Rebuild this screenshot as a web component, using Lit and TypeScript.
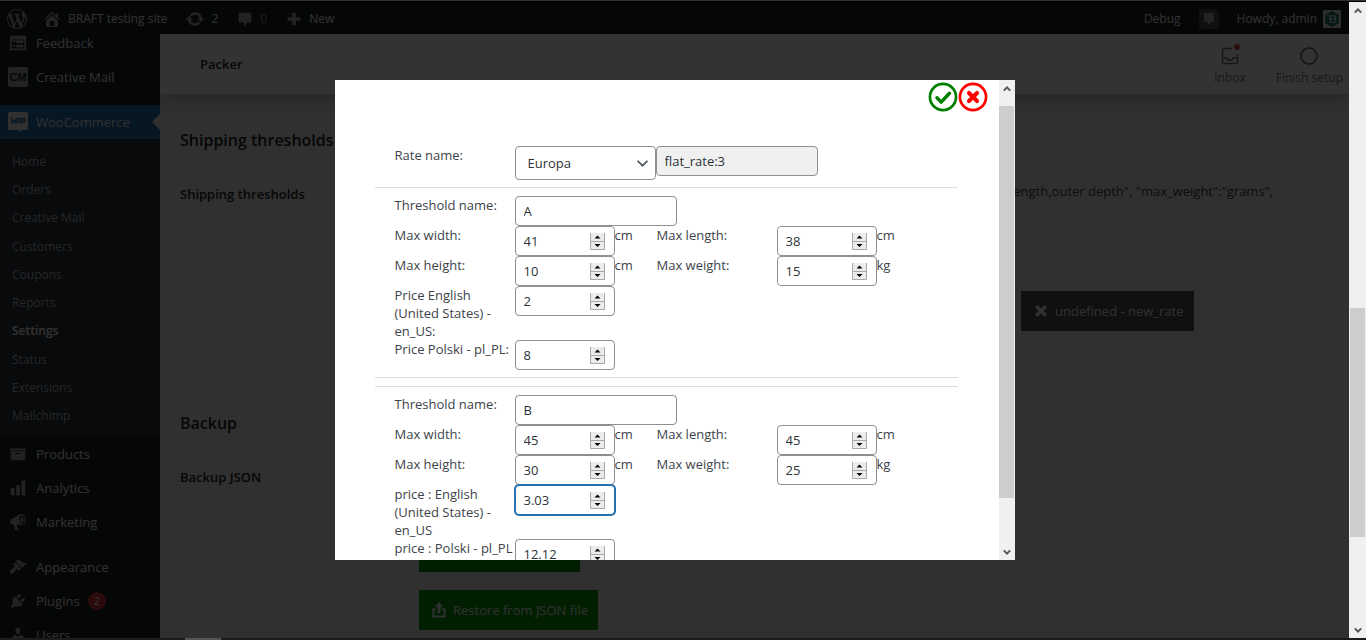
import { LitElement, html, css, svg, nothing } from "lit";
import { customElement, property } from "lit/decorators.js";

const ICONS: Record<string, unknown> = {
  wordpress: svg`<path d="M20 10c0-5.51-4.49-10-10-10C4.48 0 0 4.49 0 10c0 5.52 4.48 10 10 10 5.51 0 10-4.48 10-10zM7.78 15.37L4.37 6.22c.55-.02 1.17-.08 1.17-.08.5-.06.44-1.13-.06-1.11 0 0-1.45.11-2.37.11-.18 0-.37 0-.58-.01C4.12 2.69 6.87 1.11 10 1.11c2.33 0 4.45.87 6.05 2.34-.68-.11-1.65.39-1.65 1.58 0 .74.45 1.36.9 2.1.35.61.55 1.36.55 2.46 0 1.49-1.4 5-1.4 5l-3.03-8.37c.54-.02.82-.17.82-.17.5-.05.44-1.25-.06-1.22 0 0-1.44.12-2.38.12-.87 0-2.33-.12-2.33-.12-.5-.03-.56 1.2-.06 1.22l.92.08 1.26 3.41zM17.41 10c.24-.64.74-1.87.43-4.25.7 1.29 1.05 2.71 1.05 4.25 0 3.29-1.73 6.24-4.4 7.78.97-2.59 1.94-5.2 2.92-7.78zM6.1 18.09C3.12 16.65 1.11 13.53 1.11 10c0-1.3.23-2.48.72-3.59C3.25 10.3 4.67 14.2 6.1 18.09zm4.03-6.63l2.58 6.98c-.86.29-1.76.45-2.71.45-.79 0-1.57-.11-2.29-.33.81-2.38 1.62-4.74 2.42-7.1z"/>`,
  home: svg`<path fill-rule="evenodd" d="M16 8.5l1.53 1.53-1.06 1.06L10 4.6l-6.47 6.49-1.06-1.06L10 2.5l4 4v-2h2v4zm-6-2.46l6 5.99V18H4v-5.97zM12 17v-5H8v5h4z"/>`,
  update: svg`<path d="M10.2 3.28c3.53 0 6.43 2.61 6.92 6h2.08l-3.5 4-3.5-4h2.32c-.45-1.97-2.21-3.45-4.32-3.45-1.45 0-2.73.71-3.54 1.78L4.95 5.66C6.23 4.2 8.11 3.28 10.2 3.28zm-.4 13.44c-3.52 0-6.43-2.61-6.92-6H.8l3.5-4c1.17 1.33 2.33 2.67 3.5 4H5.48c.45 1.97 2.21 3.45 4.32 3.45 1.45 0 2.73-.71 3.54-1.78l1.71 1.95c-1.28 1.46-3.15 2.38-5.25 2.38z"/>`,
  comment: svg`<path d="M4 3h12c.6 0 1 .4 1 1v9c0 .6-.4 1-1 1h-3l-4 4.500v-4.500H4c-.6 0-1-.4-1-1V4c0-.6.4-1 1-1z"/>`,
  plus: svg`<path d="M17 8v4h-5v5H8v-5H3V8h5V3h4v5z"/>`,
  note: svg`<rect width="20" height="20" rx="2" fill="#464b50"/><path fill="#a7aaad" d="M5 4h10v9h-3l-2 3-2-3H5z"/>`,
  feedback: svg`<path fill-rule="evenodd" d="M1 2h18v16H1zM3 6v10h14V6zM4 7h3v2H4zM8 7h8v3H8zM4 12h3v2H4zM8 12h8v3H8z"/>`,
  creative: svg`<rect width="20" height="20" rx="2"/><text x="10" y="14" text-anchor="middle" font-family="Liberation Sans" font-weight="700" font-size="11" fill="#1d2327">CM</text>`,
  woo: svg`<path fill="#f0f0f1" d="M2 0h16a2 2 0 0 1 2 2v14a2 2 0 0 1-2 2h-5l-1 2-3-2H2a2 2 0 0 1-2-2V2a2 2 0 0 1 2-2z"/><path fill="none" stroke="#2271b1" stroke-width="1.500" stroke-linecap="round" stroke-linejoin="round" d="M3.500 6l1 5.500L6.700 7.500l1.300 4L9 6"/><g fill="none" stroke="#2271b1" stroke-width="1.400"><ellipse cx="11.800" cy="8.300" rx="1.200" ry="2.200"/><ellipse cx="15.500" cy="8.300" rx="1.200" ry="2.200"/></g>`,
  archive: svg`<path fill-rule="evenodd" d="M19 4v2H1V4h18zM2 7h16v10H2V7zm11 3V9H7v1h6z"/>`,
  chart: svg`<path d="M18 18V2h-4v16h4zm-6 0V7H8v11h4zm-6 0v-8H2v8h4z"/>`,
  megaphone: svg`<path fill-rule="evenodd" d="M18.150 5.940c.46 1.620.38 3.220-.02 4.480-.42 1.280-1.260 2.180-2.300 2.480-.16.06-.26.06-.4.06-.06.02-.12.02-.18.02H8.230l2.220 5.500c.02.140-.06.260-.14.340-.08.100-.24.160-.34.160H6.950c-.1 0-.26-.06-.34-.16-.08-.08-.16-.2-.14-.34l-1-5.500H4.250c-.5.060-1.080-.18-1.540-.62s-.88-1.080-1.060-1.880c-.24-.8-.2-1.560-.02-2.200.18-.62.580-1.080 1.060-1.300l9.020-5.420c.3-.2.560-.34.980-.46 1.040-.3 2.240.100 3.220.980s1.840 2.240 2.240 3.860zM15.560 11.900c.9-.2 1.620-1.160 1.840-2.500.14-.8.100-1.800-.16-2.780-.5-2-2-3.800-3.460-3.900-1.500 0-2.500 2.100-2.200 4.480.4 2.800 2.200 5 3.980 4.700zM14.900 10.200c-1 .1-1.800-1-2-2.500-.2-1.600.3-2.900 1.100-3 .8 0 1.700 1.100 1.900 2.600s-.2 2.800-1 2.900z"/>`,
  appearance: svg`<path d="M14.480 11.060L7.410 3.990l1.500-1.500c.5-.56 2.300-.47 3.510.32 1.210.8 1.430 1.280 2.910 2.100 1.180.64 2.450 1.260 4.450.85zm-.71.71L6.700 4.700 4.930 6.470c-.39.39-.39 1.020 0 1.410l1.060 1.060c.39.39.39 1.030 0 1.420-.6.6-1.430 1.110-2.210 1.690-.35.26-.7.53-1.010.84C1.430 14.230.4 16.080 1.400 17.070c.99 1 2.840-.03 4.180-1.360.31-.31.58-.66.85-1.020.57-.78 1.080-1.610 1.690-2.210.39-.39 1.020-.39 1.410 0l1.060 1.060c.39.39 1.020.39 1.410 0z"/>`,
  plugins: svg`<path d="M13.110 4.360L9.870 7.600 8 5.730l3.240-3.240c.35-.34 1.050-.2 1.560.32.52.51.66 1.210.31 1.550zm-8 1.770l.91-1.120 9.010 9.010-1.190.84c-.71.71-2.630 1.160-3.820 1.160H6.140L4.900 17.260c-.59.59-1.540.59-2.120 0-.59-.58-.59-1.530 0-2.120l1.240-1.240v-3.880c0-1.130.4-3.190 1.090-3.890zm7.260 3.970l3.240-3.240c.34-.35 1.040-.21 1.550.31.52.51.66 1.210.31 1.550l-3.240 3.250z"/>`,
  users: svg`<path d="M10 9.250c-2.270 0-2.730-3.440-2.730-3.440C7 4.020 7.820 2 9.970 2c2.160 0 2.980 2.020 2.710 3.810 0 0-.41 3.440-2.680 3.440zm0 2.570L12.720 10c2.390 0 4.520 2.330 4.520 4.530v2.490s-3.650 1.130-7.240 1.130c-3.650 0-7.240-1.130-7.240-1.130v-2.490c0-2.250 1.940-4.480 4.470-4.480z"/>`,
  avatar: svg`<rect width="20" height="20" fill="#e4e4e4"/><path fill="#12776a" d="M10 1l7.500 4.400v9.200L10 19l-7.500-4.400V5.400z"/><path fill="none" stroke="#e4e4e4" stroke-width="1.400" stroke-linejoin="round" d="M4.500 6.500h8c2.300 0 2.300 3.500 0 3.500H6.500M8 6.500v7.300h4.500c2.500 0 2.500-3.800 0-3.800"/>`,
  inbox: svg`<g fill="none" stroke="#757575" stroke-width="1.500"><path d="M12 2.500H4.500a2 2 0 0 0-2 2v11a2 2 0 0 0 2 2h11a2 2 0 0 0 2-2V8M2.500 12h4.500c.6 3 5.400 3 6 0h4.500"/></g><circle cx="17" cy="1" r="3" fill="#d94f4f"/>`,
  ring: svg`<circle cx="10" cy="10" r="8" fill="none" stroke="#757575" stroke-width="2"/>`,
  cross: svg`<path fill="none" stroke="currentColor" stroke-width="4.500" d="M4 4l12 12M16 4L4 16"/>`,
  upload: svg`<path d="M10 0l5 6h-3v8H8V6H5z"/><path fill="none" stroke="currentColor" stroke-width="2.500" d="M6 9H3v9h14V9h-3"/>`,
  confirm: svg`<circle cx="10" cy="10" r="8.700" fill="#fff" stroke="#008000" stroke-width="1.800"/><path fill="none" stroke="#008000" stroke-width="2.300" stroke-linecap="round" stroke-linejoin="round" d="M6 10.500l2.800 2.900L14.300 7.500"/>`,
  cancel: svg`<circle cx="10" cy="10" r="8.700" fill="#fff" stroke="#f00" stroke-width="1.800"/><path fill="none" stroke="#f00" stroke-width="2.700" stroke-linecap="round" d="M7.300 7.300l5.400 5.400M12.700 7.300l-5.400 5.400"/>`,
  chevron: svg`<path fill="none" stroke="#50575e" stroke-width="3.200" d="M1 5l9 9 9-9"/>`,
  up: svg`<path fill="none" stroke="#555" stroke-width="5" d="M2 14l8-8 8 8"/>`,
  down: svg`<path fill="none" stroke="#555" stroke-width="5" d="M2 6l8 8 8-8"/>`,
};

@customElement("ui-icon")
class UiIcon extends LitElement {
  @property() name = "";
  static styles = css`
    :host { display: block; flex: none; width: 20px; height: 20px; }
    .glyph { display: block; width: 100%; height: 100%; fill: currentColor; overflow: visible; }
  `;
  render() {
    return html`<svg class="glyph" viewBox="0 0 20 20" aria-hidden="true">${ICONS[this.name]}</svg>`;
  }
}

@customElement("scroll-track")
class ScrollTrack extends LitElement {
  @property({ type: Number }) start = 0;
  @property({ type: Number }) size = 50;
  static styles = css`
    :host { display: flex; flex-direction: column; flex: none; width: 17px; background: #f0f0f0; }
    .arrow { display: grid; place-items: center; height: 17px; }
    .arrow ui-icon { width: 8px; height: 8px; }
    .lane { flex: 1; display: flex; flex-direction: column; align-items: center; }
    .thumb { width: 15px; background: #cdcdcd; }
  `;
  render() {
    return html`
      <div class="arrow"><ui-icon name="up"></ui-icon></div>
      <div class="lane">
        <div style="height:${this.start}%"></div>
        <div class="thumb" style="height:${this.size}%"></div>
      </div>
      <div class="arrow"><ui-icon name="down"></ui-icon></div>`;
  }
}

interface Threshold {
  id: string;
  name: string;
  width: string;
  length: string;
  height: string;
  weight: string;
  prices: { label: string; value: string; active?: boolean }[];
}

const THRESHOLDS: Threshold[] = [
  {
    id: "a", name: "A", width: "41", length: "38", height: "10", weight: "15",
    prices: [
      { label: "Price English (United States) - en_US:", value: "2" },
      { label: "Price Polski - pl_PL:", value: "8" },
    ],
  },
  {
    id: "b", name: "B", width: "45", length: "45", height: "30", weight: "25",
    prices: [
      { label: "price : English (United States) - en_US", value: "3.03", active: true },
      { label: "price : Polski - pl_PL", value: "12.12" },
    ],
  },
];

@customElement("rate-dialog")
class RateDialog extends LitElement {
  static styles = css`
    :host { display: flex; width: 680px; max-width: 100%; height: 75vh; background: #fff; color: #3c434a; font-size: 13px; line-height: 18px; }
    scroll-track { width: 16px; }
    .body { flex: 1; min-width: 0; overflow: hidden; }
    .actions { display: flex; justify-content: flex-end; padding: 2px 11px 0 0; }
    .round { display: block; border: 0; padding: 0; background: none; }
    .round ui-icon { width: 30px; height: 30px; }
    form { padding: 34px 41px 0 40px; }
    .row { display: grid; grid-template-columns: 120px 142px 120px 1fr; padding-left: 20px; }
    .row.rate { grid-template-columns: 120px 1fr; }
    .price { min-height: 30px; }
    .nowrap { white-space: nowrap; }
    .cell { display: flex; align-items: flex-start; }
    hr { margin: 7px 0 8px; border: 0; border-top: 1px solid #dcdcde; }
    input, select { box-sizing: border-box; margin: 0; border: 1px solid #8c8f94; border-radius: 4px; padding: 0 8px; height: 30px; background: #fff; color: #2c3338; font: inherit; }
    .text { width: 162px; }
    .code { background: #f0f0f1; }
    .pick, .number { display: grid; align-items: center; }
    .pick > *, .number > * { grid-area: 1 / 1; }
    select { appearance: none; width: 141px; height: 34px; padding: 0 12px; }
    .pick ui-icon { justify-self: end; width: 11px; height: 11px; margin-right: 8px; pointer-events: none; }
    .number input { width: 100px; appearance: textfield; -moz-appearance: textfield; }
    .number input::-webkit-inner-spin-button { display: none; }
    .number input.active { border-color: #2271b1; box-shadow: 0 0 0 1px #2271b1; position: relative; }
    .spin { justify-self: end; width: 15px; height: 17px; margin-right: 10px; position: relative; pointer-events: none; }
  `;

  private number(id: string, value: string, unit = "", active = false) {
    return html`<div class="cell">
      <div class="number">
        <input id=${id} class=${active ? "active" : ""} type="number" step="any" .value=${value} />
        <svg class="spin" viewBox="0 0 15 17" aria-hidden="true">
          <rect width="15" height="17" fill="#ececec" />
          <path d="M0.500 0v16.500h14V0M0 8.500h15" fill="none" stroke="#a8a8a8" />
          <path d="M7.500 2.500l3 3h-6zM7.500 14l3-3h-6z" fill="#000" />
        </svg>
      </div>
      ${unit ? html`<span>${unit}</span>` : nothing}
    </div>`;
  }

  private threshold(t: Threshold) {
    return html`
      <div class="row">
        <label for="name-${t.id}">Threshold name:</label>
        <input id="name-${t.id}" class="text" type="text" .value=${t.name} />
      </div>
      <div class="row">
        <label for="width-${t.id}">Max width:</label>${this.number("width-" + t.id, t.width, "cm")}
        <label for="length-${t.id}">Max length:</label>${this.number("length-" + t.id, t.length, "cm")}
      </div>
      <div class="row">
        <label for="height-${t.id}">Max height:</label>${this.number("height-" + t.id, t.height, "cm")}
        <label for="weight-${t.id}">Max weight:</label>${this.number("weight-" + t.id, t.weight, "kg")}
      </div>
      ${t.prices.map((p, i) => html`<div class="row price">
        <label class=${i ? "nowrap" : ""} for="price-${t.id}-${i}">${p.label}</label>
        ${this.number(`price-${t.id}-${i}`, p.value, "", p.active)}
      </div>`)}
      <hr />`;
  }

  render() {
    return html`
      <div class="body">
        <div class="actions">
          <button class="round" type="button" aria-label="Save"><ui-icon name="confirm"></ui-icon></button>
          <button class="round" type="button" aria-label="Close"><ui-icon name="cancel"></ui-icon></button>
        </div>
        <form>
          <div class="row rate">
            <label for="rate">Rate name:</label>
            <div class="cell">
              <div class="pick">
                <select id="rate"><option>Europa</option></select>
                <ui-icon name="chevron"></ui-icon>
              </div>
              <input class="text code" type="text" readonly aria-label="Rate code" value="flat_rate:3" />
            </div>
          </div>
          <hr />
          ${THRESHOLDS.map((t, i) => html`${i ? html`<hr />` : nothing}${this.threshold(t)}`)}
        </form>
      </div>
      <scroll-track start="2" size="88"></scroll-track>`;
  }
}

@customElement("admin-menu")
class AdminMenu extends LitElement {
  static styles = css`
    :host { display: block; flex: none; width: 160px; overflow: hidden; background: #1d2327; color: #f0f0f1; font-size: 13px; }
    nav { margin-top: -8px; }
    a { color: inherit; text-decoration: none; }
    .item { display: flex; align-items: center; gap: 8px; height: 34px; padding-left: 8px; }
    .item ui-icon { color: #a7aaad; }
    .small { width: 18px; height: 18px; margin: 0 1px; }
    .group { padding-bottom: 11px; }
    .current { background: #2271b1; justify-content: flex-start; }
    .pointer { margin-left: auto; border: 8px solid transparent; border-right-color: #f0f0f1; border-left: 0; }
    .sub { display: flex; flex-direction: column; justify-content: space-between; box-sizing: border-box; height: 297px; margin-bottom: 1px; padding: 9px 12px 6px; background: #2c3338; color: #b5bcc2; font-size: 12px; line-height: 28px; }
    .on { color: #fff; font-weight: 600; }
    .badge { border-radius: 9px; min-width: 18px; background: #d63638; color: #fff; font-size: 11px; line-height: 18px; text-align: center; }
  `;
  private item(icon: string, label: string, badge = "") {
    return html`<a class="item" href="#"><ui-icon class="small" name=${icon}></ui-icon>${label}${badge ? html`<span class="badge">${badge}</span>` : nothing}</a>`;
  }
  render() {
    const sub = ["Home", "Orders", "Creative Mail", "Customers", "Coupons", "Reports", "Settings", "Status", "Extensions", "Mailchimp"];
    return html`<nav>
      <div class="group">
        ${this.item("feedback", "Feedback")}
        <a class="item" href="#"><ui-icon name="creative"></ui-icon>Creative Mail</a>
      </div>
      <a class="item current" href="#"><ui-icon name="woo"></ui-icon>WooCommerce<span class="pointer"></span></a>
      <div class="sub">${sub.map((s) => html`<a class=${s === "Settings" ? "on" : ""} href="#">${s}</a>`)}</div>
      <div class="group">
        ${this.item("archive", "Products")}${this.item("chart", "Analytics")}${this.item("megaphone", "Marketing")}
      </div>
      ${this.item("appearance", "Appearance")}${this.item("plugins", "Plugins", "2")}${this.item("users", "Users")}
    </nav>`;
  }
}

@customElement("app-root")
class AppRoot extends LitElement {
  static styles = css`
    :host { display: flex; flex-direction: column; height: 100vh; overflow: hidden; background: #000; font-family: "Open Sans", "Noto Sans", sans-serif; font-size: 13px; line-height: 18px; }
    a { color: inherit; text-decoration: none; }
    .edge { flex: none; height: 1px; margin-bottom: 1px; background: #2f3133; }
    .window { flex: 1; min-height: 0; display: flex; }
    .site { flex: 1; min-width: 0; position: relative; display: flex; flex-direction: column; }
    .bar { flex: none; display: flex; align-items: center; gap: 18px; height: 32px; padding: 2px 8px 0 7px; box-sizing: border-box; background: #1d2327; color: #f0f0f1; font-size: 12px; z-index: 1; }
    .bar a { display: flex; align-items: center; gap: 6px; }
    .bar .brand { margin-right: -3px; }
    .bar ui-icon { color: #a7aaad; }
    .bar .mid { width: 18px; height: 18px; }
    .dim { opacity: 0.5; }
    .right { margin-left: auto; }
    .columns { flex: 1; min-height: 0; display: flex; }
    .content { flex: 1; min-width: 0; overflow: hidden; background: #f0f0f1; color: #1d2327; }
    .head { display: flex; align-items: center; height: 60px; padding: 0 6px 0 40px; box-sizing: border-box; background: #fff; box-shadow: 0 8px 16px rgba(85, 93, 102, 0.3); font-weight: 600; }
    .tabs { margin-left: auto; display: flex; gap: 30px; padding-top: 4px; color: #757575; font-size: 12px; font-weight: 400; }
    .tabs button { display: grid; justify-items: center; gap: 3px; border: 0; padding: 0; background: none; color: inherit; font: inherit; line-height: 18px; }
    .settings { padding: 33px 20px 0; }
    h2 { margin: 0; font-size: 16px; font-weight: 600; line-height: 26px; }
    .setting { display: flex; padding-top: 29px; font-weight: 600; }
    .setting.first { min-height: 228px; }
    .side { width: 322px; margin-left: auto; color: #3c434a; font-weight: 400; display: flex; flex-direction: column; align-items: flex-start; gap: 91px; white-space: nowrap; }
    .side p { margin: 0 0 0 3px; }
    .lead { width: 239px; flex: none; padding-top: 3px; }
    .btn { display: flex; align-items: center; gap: 6px; height: 40px; border: 0; padding: 0 10px 0 12px; background: #099a00; color: #f0f0f1; font: inherit; font-weight: 400; white-space: nowrap; }
    .btn ui-icon { width: 16px; height: 16px; }
    .btn.dark { background: #505050; margin-left: 14px; }
    .stack { display: grid; justify-items: start; gap: 18px; padding-top: 67px; }
    .overlay { position: absolute; inset: 0; z-index: 2; display: grid; place-items: center; background: rgba(0, 0, 0, 0.8); }
    .foot { flex: none; height: 2px; padding-left: 185px; background: #1f1a1c; }
    .foot div { width: 36px; height: 2px; background: #555; }
  `;
  render() {
    return html`
      <div class="edge"></div>
      <div class="window">
        <div class="site">
          <header class="bar">
            <a class="brand" href="#" aria-label="WordPress"><ui-icon name="wordpress"></ui-icon></a>
            <a href="#"><ui-icon name="home"></ui-icon>BRAFT testing site</a>
            <a href="#"><ui-icon name="update"></ui-icon>2</a>
            <a href="#"><ui-icon class="mid" name="comment"></ui-icon><span class="dim">0</span></a>
            <a href="#"><ui-icon class="mid" name="plus"></ui-icon>New</a>
            <a class="right" href="#">Debug</a>
            <a href="#" aria-label="Notes"><ui-icon name="note"></ui-icon></a>
            <a href="#">Howdy, admin<ui-icon class="mid" name="avatar"></ui-icon></a>
          </header>
          <div class="columns">
            <admin-menu></admin-menu>
            <main class="content">
              <div class="head">
                Packer
                <div class="tabs">
                  <button type="button"><ui-icon name="inbox"></ui-icon>Inbox</button>
                  <button type="button"><ui-icon name="ring"></ui-icon>Finish setup</button>
                </div>
              </div>
              <div class="settings">
                <h2>Shipping thresholds</h2>
                <div class="setting first">
                  <span class="lead">Shipping thresholds</span>
                  <div class="side">
                    <p>length,outer depth", "max_weight":"grams",</p>
                    <button class="btn dark" type="button"><ui-icon name="cross"></ui-icon>undefined - new_rate</button>
                  </div>
                </div>
                <h2>Backup</h2>
                <div class="setting">
                  <span class="lead">Backup JSON</span>
                  <div class="stack">
                    <button class="btn" type="button"><ui-icon name="upload"></ui-icon>Download JSON file</button>
                    <button class="btn" type="button"><ui-icon name="upload"></ui-icon>Restore from JSON file</button>
                  </div>
                </div>
              </div>
            </main>
          </div>
          <div class="overlay"><rate-dialog role="dialog" aria-label="Rate"></rate-dialog></div>
        </div>
        <scroll-track start="48" size="38"></scroll-track>
      </div>
      <div class="foot"><div></div></div>`;
  }
}
